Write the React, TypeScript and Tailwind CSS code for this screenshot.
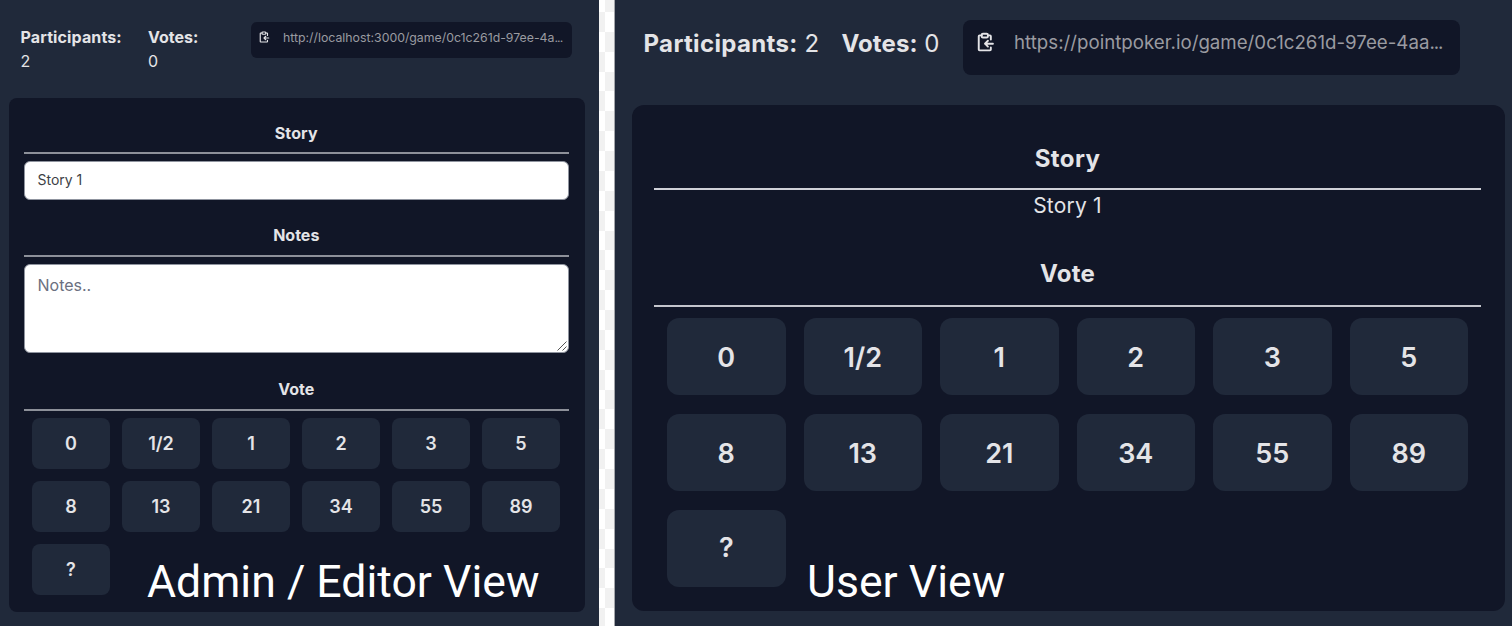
const votes = ["0", "1/2", "1", "2", "3", "5", "8", "13", "21", "34", "55", "89", "?"];

function CopyIcon({ className }: { className: string }) {
  return (
    <svg className={className} viewBox="0 0 24 24" fill="none" stroke="currentColor" strokeWidth="2.3" strokeLinecap="round" strokeLinejoin="round">
      <path d="M8 4H5.5a1 1 0 0 0-1 1v16a1 1 0 0 0 1 1H18a1 1 0 0 0 1-1v-2.5M16 4h2a1 1 0 0 1 1 1v4" />
      <rect x="8" y="2" width="7.5" height="4.5" rx="1.5" />
      <path d="M21.5 14H12M15.5 10.5 12 14l3.5 3.5" />
    </svg>
  );
}

function AdminView() {
  return (
    <section className="relative h-full w-[599px] shrink-0 bg-[#20293a] px-[9px]">
      <header className="flex h-[98px] items-start pt-[25px] text-base leading-6">
        <div className="ml-[11.5px] w-[127.5px]">
          <p className="font-bold tracking-[0.12px]">Participants:</p>
          <p>2</p>
        </div>
        <div className="w-[103px]">
          <p className="font-bold">Votes:</p>
          <p>0</p>
        </div>
        <div className="-mt-[3px] flex h-9 w-[321px] items-start rounded-md bg-[#111627] pl-[7px] pt-[8px]">
          <CopyIcon className="mt-px size-3 shrink-0" />
          <span className="ml-[13px] whitespace-nowrap text-[12.3px] leading-4 text-[#9a9ba1]">http://localhost:3000/game/0c1c261d-97ee-4a<span className="tracking-[-0.9px]">...</span></span>
        </div>
      </header>
      <main className="h-[513.5px] w-[576px] rounded-lg bg-[#111627] pl-[15px] pr-[16.5px]">
        <h2 className="flex h-[56px] items-end justify-center border-b-2 border-[#8d9099] pb-[7px] text-base leading-6 font-bold tracking-[0.1px]">Story</h2>
        <div className="mt-[7px] flex h-[38.5px] items-center rounded-md border border-[#8f949f] bg-white px-[12.5px] text-sm text-[#3d3f46]">Story 1</div>
        <h2 className="flex h-[57px] items-end justify-center border-b-2 border-[#8d9099] pb-[8px] text-base leading-6 font-bold">Notes</h2>
        <div className="relative mt-[7px] h-[89.5px] rounded-md border border-[#8f949f] bg-white px-[12.5px] pt-[8.5px] text-base leading-6 text-[#6b7080]">
          Notes..
          <svg className="absolute right-px bottom-px size-[10px]" viewBox="0 0 10 10" stroke="#555" strokeWidth="1"><path d="M0.5 9.5 9.5 0.5M5.5 9.5 9.5 5.5" /></svg>
        </div>
        <h2 className="flex h-[57.5px] items-end justify-center border-b-2 border-[#8d9099] pb-[8px] text-base leading-6 font-bold">Vote</h2>
        <div className="ml-2 mr-[8.5px] mt-[7.5px] grid grid-cols-6 gap-x-[12px] gap-y-[12.2px]">
          {votes.map((v) => (
            <button key={v} className="h-[51px] rounded-lg bg-[#20293a] text-lg font-semibold">{v}</button>
          ))}
        </div>
      </main>
      <p className="absolute left-[147px] top-[555px] whitespace-nowrap font-['Roboto',sans-serif] text-[44.6px] leading-[54px] text-white">Admin / Editor View</p>
    </section>
  );
}

function Divider() {
  return (
    <div className="flex h-full w-4 shrink-0 border-r border-[#a3a5aa]">
      <div className="w-1.5 bg-[repeating-linear-gradient(#fff_0_19.87px,#f1f1f1_19.87px_39.74px)] bg-[length:100%_800px] bg-[position:0_-7.87px]" />
      <div className="w-[9px] bg-[repeating-linear-gradient(#f1f1f1_0_19.87px,#fff_19.87px_39.74px)] bg-[length:100%_800px] bg-[position:0_-7.87px]" />
    </div>
  );
}

function UserView() {
  return (
    <section className="relative h-full flex-1 bg-[#20293a] pl-[17px] pr-[7px]">
      <header className="flex h-[105px] items-start pt-[20px] text-2xl leading-[48px]">
        <p className="ml-[11.5px] w-[198px] whitespace-nowrap"><b className="tracking-[0.35px]">Participants:</b> 2</p>
        <p className="w-[121.5px] whitespace-nowrap"><b className="tracking-[0.1px]">Votes:</b> 0</p>
        <div className="flex h-[55px] w-[497px] items-start rounded-lg bg-[#111627] pl-[12px] pt-[12px]">
          <CopyIcon className="size-5 shrink-0" />
          <span className="ml-[19px] mt-px whitespace-nowrap text-[18.7px] leading-5 text-[#9a9ba1]">https://pointpoker.io/game/0c1c261d-97ee-4aa<span className="tracking-[-1.1px]">...</span></span>
        </div>
      </header>
      <main className="h-[506px] w-[873px] rounded-xl bg-[#111627] pl-[22px] pr-[24px]">
        <h2 className="flex h-[85px] items-end justify-center border-b-2 border-[#d0d1d8] pb-[11px] text-2xl leading-9 font-bold tracking-[0.4px]">Story</h2>
        <p className="h-[31px] text-center text-[21px] leading-[31px] tracking-[0.2px]">Story 1</p>
        <h2 className="flex h-[86px] items-end justify-center border-b-2 border-[#c4c5cc] pb-[13px] text-2xl leading-9 font-bold tracking-[0.2px]">Vote</h2>
        <div className="mx-[13px] mt-[11px] grid grid-cols-6 gap-x-[18px] gap-y-[19px]">
          {votes.map((v) => (
            <button key={v} className="h-[77px] rounded-xl bg-[#20293a] pt-[3px] text-[27px] font-semibold last:pt-0">{v}</button>
          ))}
        </div>
      </main>
      <p className="absolute left-[192px] top-[555px] whitespace-nowrap font-['Roboto',sans-serif] text-[44.6px] leading-[54px] text-white">User View</p>
    </section>
  );
}

export default function App() {
  return (
    <div className="flex h-[626px] w-[1512px] overflow-hidden font-['Inter',sans-serif] text-[#e4e4e7]">
      <AdminView />
      <Divider />
      <UserView />
    </div>
  );
}
